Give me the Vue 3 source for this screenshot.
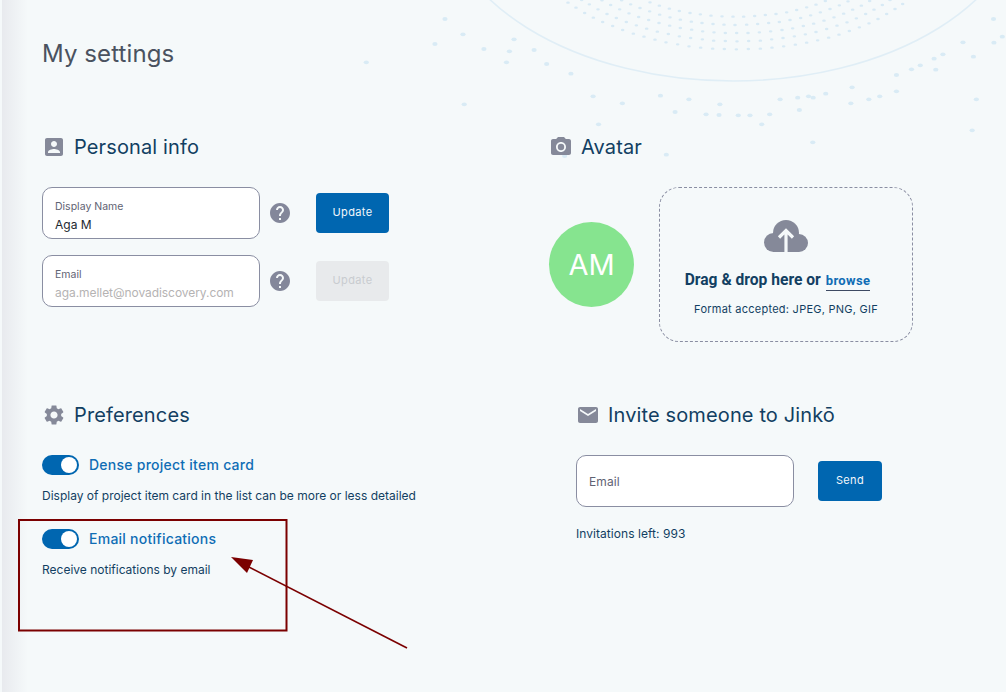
<script setup>
const rowsLeft = [
  [[270,7],[298,17],[328,26],[358,33],[390,39],[421,43],[453,47],[486,49],[519,50]],
  [[185,1],[212,13],[240,24],[269,34],[299,44],[330,52],[361,59],[394,65],[426,69],[459,72],[492,74],[525,75]],
  [[126,1],[152,15],[179,28],[207,40],[236,51],[266,60],[297,69],[329,77],[361,84],[395,89],[428,94],[462,97],[496,99],[530,99]],
  [[65,0],[88,13],[114,28],[141,42],[169,54],[199,66],[229,76],[260,86],[292,95],[325,102],[358,109],[392,114],[427,118],[461,122],[496,123],[531,124]],
  [[24,8],[48,23],[74,39],[100,53],[128,66],[158,78],[188,90],[220,101],[252,110],[285,119],[318,127],[353,133],[387,139],[422,143],[458,146],[493,147],[529,148]]
]
const rowsRight = [
  [[41,50],[74,48],[106,45],[138,42],[170,37],[200,30],[230,22],[258,14],[286,3]],
  [[50,74],[83,72],[116,69],[148,66],[180,60],[212,54],[242,46],[271,37],[300,27],[328,16],[354,4]],
  [[54,99],[88,97],[122,94],[156,90],[188,85],[220,78],[251,71],[282,62],[312,52],[341,41],[368,29],[394,17],[419,3]],
  [[56,123],[91,122],[125,118],[159,114],[193,109],[226,103],[258,96],[290,87],[321,77],[351,67],[379,55],[407,42],[432,29],[457,15],[480,0]],
  [[55,147],[91,146],[126,143],[161,139],[196,134],[230,128],[263,121],[296,113],[327,104],[358,93],[388,82],[417,70],[444,57],[470,42],[495,27],[518,12]]
]
const fineDots = [
  ...rowsLeft.flat().map(([x, y]) => [560 + x / 3, y / 3]),
  ...rowsRight.flat().map(([x, y]) => [730 + x / 3, y / 3])
]
const looseDots = [
  [227,57],[270,103],[203,132],[392,118],[320,147],[381,154],[440,150],[39,187],[374,187],[470,192],[528,221],[273,313],
  [581,289],[651,310],[742,287],[810,298],[777,336],[884,313],[851,343],[882,345],[928,346],[956,346],[1003,343],[984,373],
  [594,373],[1028,298],[1070,293],[1096,289],[1107,293],[1137,281],[1074,330],[1200,262],[1197,310],[1240,298],[1266,289],
  [1306,274],[1306,225],[1342,208],[1363,196],[1396,176],[1417,163],[1400,209],[1490,170],[1465,127],[1538,57],[1559,110],
  [1539,128],[1497,298],[1487,391],[1106,427],[756,464],[513,468]
].map(([x, y]) => [350 + x / 2.39, y / 3])

const fields = [
  { label: 'Display Name', value: 'Aga M', muted: false },
  { label: 'Email', value: 'aga.mellet@novadiscovery.com', muted: true }
]
const prefs = [
  { title: 'Dense project item card', text: 'Display of project item card in the list can be more or less detailed' },
  { title: 'Email notifications', text: 'Receive notifications by email' }
]
const helpPath = 'M12 2C6.48 2 2 6.48 2 12s4.48 10 10 10 10-4.48 10-10S17.52 2 12 2zm1 17h-2v-2h2v2zm2.07-7.75l-.9.92C13.45 12.9 13 13.5 13 15h-2v-.5c0-1.1.45-2.1 1.17-2.83l1.24-1.26c.37-.36.59-.86.59-1.41 0-1.1-.9-2-2-2s-2 .9-2 2H8c0-2.21 1.79-4 4-4s4 1.79 4 4c0 .88-.36 1.68-.93 2.25z'
</script>

<template>
  <div class="page">
    <svg class="backdrop" width="1006" height="692" viewBox="0 0 1006 692" aria-hidden="true">
      <ellipse cx="733" cy="-100" rx="291" ry="181" fill="none" stroke="#e0eef6" stroke-width="1.6" />
      <ellipse v-for="(d, i) in fineDots" :key="'f' + i" :cx="d[0]" :cy="d[1]" rx="1.8" ry="1.2" fill="#d8eaf5" />
      <ellipse v-for="(d, i) in looseDots" :key="'l' + i" :cx="d[0]" :cy="d[1]" rx="2.6" ry="1.9" fill="#d9ebf5" />
    </svg>
    <div class="edge"></div>

    <main class="content">
      <h1 class="title">My settings</h1>

      <div class="grid top">
        <section>
          <h2 class="heading">
            <svg class="head-icon" viewBox="0 0 24 24"><path d="M3 5v14c0 1.1.89 2 2 2h14c1.1 0 2-.9 2-2V5c0-1.1-.9-2-2-2H5c-1.11 0-2 .9-2 2zm12 4c0 1.66-1.34 3-3 3s-3-1.34-3-3 1.34-3 3-3 3 1.34 3 3zm-9 8c0-2 4-3.1 6-3.1s6 1.1 6 3.1v1H6v-1z" /></svg>
            Personal info
          </h2>
          <div class="fields">
            <div v-for="(f, i) in fields" :key="f.label" class="field-row">
              <div class="field">
                <span class="field-label">{{ f.label }}</span>
                <span class="field-value" :class="{ muted: f.muted }">{{ f.value }}</span>
              </div>
              <svg class="help" viewBox="2 2 20 20"><path :d="helpPath" /></svg>
              <button class="btn update" :class="{ disabled: i === 1 }" type="button">Update</button>
            </div>
          </div>
        </section>

        <section>
          <h2 class="heading">
            <svg class="head-icon" viewBox="0 0 24 24"><circle cx="12" cy="12" r="3.2" /><path d="M9 2L7.17 4H4c-1.1 0-2 .9-2 2v12c0 1.1.9 2 2 2h16c1.1 0 2-.9 2-2V6c0-1.1-.9-2-2-2h-3.17L15 2H9zm3 15c-2.76 0-5-2.24-5-5s2.24-5 5-5 5 2.24 5 5-2.24 5-5 5z" /></svg>
            Avatar
          </h2>
          <div class="avatar-row">
            <div class="avatar">AM</div>
            <div class="drop">
              <svg class="cloud" width="44" height="32" viewBox="0 0 44 32">
                <g fill="#858999">
                  <circle cx="22" cy="13" r="13" />
                  <circle cx="9.5" cy="22.5" r="9.5" />
                  <circle cx="35" cy="23" r="9" />
                  <rect x="9" y="18" width="26" height="14" />
                </g>
                <path d="M22 32V11.5M15 17.5l7-7 7 7" fill="none" stroke="#f5f9fa" stroke-width="3.2" />
              </svg>
              <div class="drop-line"><b>Drag &amp; drop here or</b><a class="browse">browse</a></div>
              <div class="formats">Format accepted: JPEG, PNG, GIF</div>
            </div>
          </div>
        </section>
      </div>

      <div class="grid bottom">
        <section>
          <h2 class="heading">
            <svg class="head-icon" viewBox="0 0 24 24"><path d="M19.14 12.94c.04-.3.06-.61.06-.94 0-.32-.02-.64-.07-.94l2.03-1.58c.18-.14.23-.41.12-.61l-1.92-3.32c-.12-.22-.37-.29-.59-.22l-2.39.96c-.5-.38-1.03-.7-1.62-.94l-.36-2.54c-.04-.24-.24-.41-.48-.41h-3.84c-.24 0-.43.17-.47.41l-.36 2.54c-.59.24-1.13.57-1.62.94l-2.39-.96c-.22-.08-.47 0-.59.22L2.74 8.87c-.12.21-.08.47.12.61l2.03 1.58c-.05.3-.09.63-.09.94s.02.64.07.94l-2.03 1.58c-.18.14-.23.41-.12.61l1.92 3.32c.12.22.37.29.59.22l2.39-.96c.5.38 1.03.7 1.62.94l.36 2.54c.05.24.24.41.48.41h3.84c.24 0 .44-.17.47-.41l.36-2.54c.59-.24 1.13-.56 1.62-.94l2.39.96c.22.08.47 0 .59-.22l1.92-3.32c.12-.22.07-.47-.12-.61l-2.01-1.58zM12 15.6c-1.98 0-3.6-1.62-3.6-3.6s1.62-3.6 3.6-3.6 3.6 1.62 3.6 3.6-1.62 3.6-3.6 3.6z" /></svg>
            Preferences
          </h2>
          <div class="prefs">
            <div v-for="p in prefs" :key="p.title" class="pref">
              <div class="pref-head">
                <span class="toggle"><span class="knob"></span></span>
                <span class="pref-title">{{ p.title }}</span>
              </div>
              <p class="pref-text">{{ p.text }}</p>
            </div>
          </div>
        </section>

        <section class="invite">
          <h2 class="heading">
            <svg class="head-icon" viewBox="0 0 24 24"><path d="M20 4H4c-1.1 0-1.99.9-1.99 2L2 18c0 1.1.9 2 2 2h16c1.1 0 2-.9 2-2V6c0-1.1-.9-2-2-2zm0 4l-8 5-8-5V6l8 5 8-5v2z" /></svg>
            Invite someone to Jinkō
          </h2>
          <div class="invite-row">
            <div class="field invite-field"><span class="field-ph">Email</span></div>
            <button class="btn send" type="button">Send</button>
          </div>
          <p class="left">Invitations left: 993</p>
        </section>
      </div>
    </main>

    <svg class="annotation" width="1006" height="692" viewBox="0 0 1006 692" aria-hidden="true">
      <rect x="19" y="520" width="267.5" height="110.5" fill="none" stroke="#7b0000" stroke-width="2" />
      <path d="M407 648L243 564" fill="none" stroke="#7b0000" stroke-width="1.6" />
      <path d="M231 557L253 560L247 573Z" fill="#7b0000" />
    </svg>
  </div>
</template>

<style scoped>
.page {
  position: relative;
  width: 1006px;
  height: 692px;
  overflow: hidden;
  background: #f5f9fa;
  font-family: Inter, "Liberation Sans", sans-serif;
  color: #123f62;
}
.backdrop, .annotation {
  position: absolute;
  left: 0;
  top: 0;
  pointer-events: none;
}
.edge {
  position: absolute;
  left: 2px;
  top: 0;
  bottom: 0;
  width: 26px;
  background: linear-gradient(90deg, #e8eaee, #f5f9fa);
}
.content {
  position: relative;
  padding: 39px 0 0 42px;
}
.title {
  margin: 0;
  font-size: 24px;
  line-height: 30px;
  font-weight: 400;
  color: #4a5260;
  letter-spacing: 0.1px;
}
.grid {
  display: grid;
  grid-template-columns: 507px 1fr;
}
.top { margin-top: 66px; }
.bottom { margin-top: 61px; }
.heading {
  display: flex;
  align-items: center;
  gap: 8px;
  margin: 0;
  height: 24px;
  font-size: 20px;
  font-weight: 400;
  color: #123f62;
  letter-spacing: 0.13px;
}
.head-icon {
  width: 24px;
  height: 24px;
  fill: #858999;
  flex: none;
}
.fields {
  display: flex;
  flex-direction: column;
  gap: 16px;
  margin-top: 28px;
}
.field-row {
  display: flex;
  align-items: center;
}
.field {
  box-sizing: border-box;
  width: 218px;
  height: 52px;
  padding: 6px 12px 0;
  display: flex;
  flex-direction: column;
  justify-content: center;
  background: #fff;
  border: 1px solid #8a8ea2;
  border-radius: 10px;
}
.field-label {
  font-size: 10.5px;
  line-height: 14px;
  color: #5f6373;
}
.field-value {
  margin-top: 3px;
  font-size: 12px;
  line-height: 15px;
  color: #222831;
}
.field-value.muted {
  color: #b5b3b3;
  letter-spacing: -0.06px;
}
.help {
  width: 20px;
  height: 20px;
  margin-left: 10px;
  fill: #83879a;
}
.btn {
  box-sizing: border-box;
  height: 40px;
  border: 0;
  border-radius: 4px;
  padding: 0 0 2px;
  background: #0066b0;
  color: #f2f7fb;
  font-family: inherit;
  font-size: 11px;
  font-weight: 400;
  letter-spacing: 0.35px;
}
.update {
  width: 73px;
  margin-left: 26px;
}
.btn.disabled {
  background: #e8eaec;
  color: #c8ccd0;
}
.avatar-row {
  display: flex;
  align-items: center;
  margin-top: 28px;
}
.avatar {
  width: 85px;
  height: 85px;
  border-radius: 50%;
  background: #86e48f;
  color: #fff;
  font-size: 29px;
  display: flex;
  align-items: center;
  justify-content: center;
}
.drop {
  box-sizing: border-box;
  width: 254px;
  height: 155px;
  margin-left: 25px;
  border: 1px dashed #8a8ea2;
  border-radius: 20px;
  display: flex;
  flex-direction: column;
  align-items: center;
  padding-top: 32px;
}
.drop-line {
  display: flex;
  align-items: baseline;
  margin-top: 19px;
  margin-right: 17px;
  font-family: Roboto, sans-serif;
}
.drop-line b {
  font-size: 15.6px;
  font-weight: 700;
  color: #123f62;
}
.browse {
  margin-left: 5px;
  padding-bottom: 2px;
  border-bottom: 1px solid #3d4a63;
  font-size: 13px;
  font-weight: 700;
  color: #0f6db5;
  letter-spacing: 0.35px;
}
.formats {
  margin-top: 11px;
  font-size: 11px;
  letter-spacing: 0.25px;
  color: #123f62;
}
.invite { padding-left: 27px; }
.invite-field { padding-top: 0; }
.prefs {
  display: flex;
  flex-direction: column;
  gap: 25px;
  margin-top: 28px;
}
.pref-head {
  display: flex;
  align-items: center;
  gap: 10px;
  height: 20px;
}
.toggle {
  box-sizing: border-box;
  width: 37px;
  height: 20px;
  padding: 2px;
  border-radius: 10px;
  background: #0066b0;
  display: flex;
  justify-content: flex-end;
}
.knob {
  width: 16px;
  height: 16px;
  border-radius: 50%;
  background: #fff;
}
.pref-title {
  font-size: 14px;
  font-weight: 500;
  color: #0f6db5;
  letter-spacing: 0.25px;
  padding-bottom: 1px;
}
.pref-text {
  margin: 13px 0 0;
  font-size: 12px;
  line-height: 16px;
  color: #123f62;
}
.invite-row {
  display: flex;
  align-items: center;
  margin-top: 28px;
}
.field-ph {
  font-size: 12px;
  color: #5f6373;
  letter-spacing: 0.1px;
}
.send {
  width: 64px;
  margin-left: 24px;
}
.left {
  margin: 19px 0 0;
  font-size: 12px;
  line-height: 16px;
  color: #123f62;
  letter-spacing: 0.05px;
}
</style>
